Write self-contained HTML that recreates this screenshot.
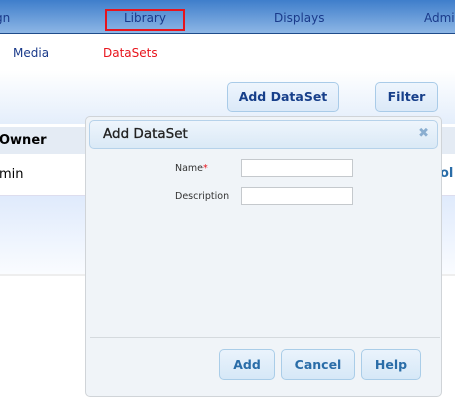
<!DOCTYPE html>
<html><head><style>
*{margin:0;padding:0;box-sizing:border-box}
body{width:455px;height:408px;overflow:hidden;background:#fff;font-family:"DejaVu Sans","Liberation Sans",sans-serif;position:relative}
.nav{position:absolute;left:0;top:0;width:455px;height:34px;background:linear-gradient(#3f7ecb,#8db6e5);border-bottom:1px solid #1f4c8a}
.nav span{position:absolute;top:11px;font-size:12px;color:#1a3a8a}
.sub{position:absolute;top:34px;left:0;width:455px;height:90px;background:linear-gradient(#fff 40%,#e4eefb)}
.a{position:absolute;font-size:12px}
.btn{position:absolute;border:1px solid #a9cbe8;border-radius:5px;background:linear-gradient(#eef5fd,#dbe9f8);color:#173f8a;font-weight:bold;font-size:12.5px;text-align:center}
.th{position:absolute;left:0;top:127px;width:455px;height:27px;background:#e4ebf4}
.row{position:absolute;left:0;top:154px;width:455px;height:42px;background:#fff;border-bottom:1px solid #dde}
.grad{position:absolute;left:0;top:196px;width:455px;height:80px;background:linear-gradient(#dfeafc,#fafcff);border-bottom:2px solid #eee}
.dlg{position:absolute;left:85px;top:116px;width:357px;height:281px;background:#f0f4f8;border:1px solid #d0d4d8;border-radius:5px}
.hd{position:absolute;left:3px;top:3px;width:349px;height:29px;border:1px solid #b6d2ea;border-radius:5px;background:linear-gradient(#eef5fc,#dae9f6)}
.lb{position:absolute;font-size:9.5px;color:#333}
.in{position:absolute;width:112px;height:18px;background:#fff;border:1px solid #c5c9cd}
.b2{position:absolute;top:232px;height:31px;border:1px solid #aacde8;border-radius:5px;background:linear-gradient(#eaf3fc,#d6e8f7);color:#2a6da8;font-weight:bold;font-size:12.5px;text-align:center;line-height:29px}
</style></head><body>
<div class="nav"><span style="left:-5px">gn</span><span style="left:124px">Library</span><span style="left:274px">Displays</span><span style="left:424px">Admi</span>
<div style="position:absolute;left:105px;top:9px;width:80px;height:22px;border:2px solid #e8141c"></div></div>
<div class="sub"></div>
<div class="a" style="left:13px;top:46px;color:#1a3a8a">Media</div>
<div class="a" style="left:103px;top:46px;color:#e8141c">DataSets</div>
<div class="btn" style="left:227px;top:82px;width:112px;height:30px;line-height:28px">Add DataSet</div>
<div class="btn" style="left:375px;top:82px;width:63px;height:30px;line-height:28px">Filter</div>
<div class="th"><b style="position:absolute;left:-1px;top:6px;font-size:13px">Owner</b></div>
<div class="row"><span style="position:absolute;left:-1px;top:13px;font-size:13px">min</span><span style="position:absolute;left:440px;top:12px;font-size:13px;color:#2a6da8;font-weight:bold">ol</span></div>
<div class="grad"></div>
<div class="dlg">
<div class="hd"><span style="position:absolute;left:13px;top:5px;font-size:13.5px;color:#222;-webkit-text-stroke:0.3px #222">Add DataSet</span><span style="position:absolute;right:8px;top:5px;font-size:13px;color:#8aaed0;font-weight:bold">✖</span></div>
<div class="lb" style="left:89px;top:46px">Name<span style="color:#e8141c">*</span></div>
<div class="in" style="left:155px;top:42px"></div>
<div class="lb" style="left:89px;top:74px">Description</div>
<div class="in" style="left:155px;top:70px"></div>
<div style="position:absolute;left:4px;top:220px;width:350px;height:1px;background:#d5dade"></div>
<div class="b2" style="left:133px;width:56px">Add</div>
<div class="b2" style="left:195px;width:74px">Cancel</div>
<div class="b2" style="left:275px;width:60px">Help</div>
</div>
</body></html>
